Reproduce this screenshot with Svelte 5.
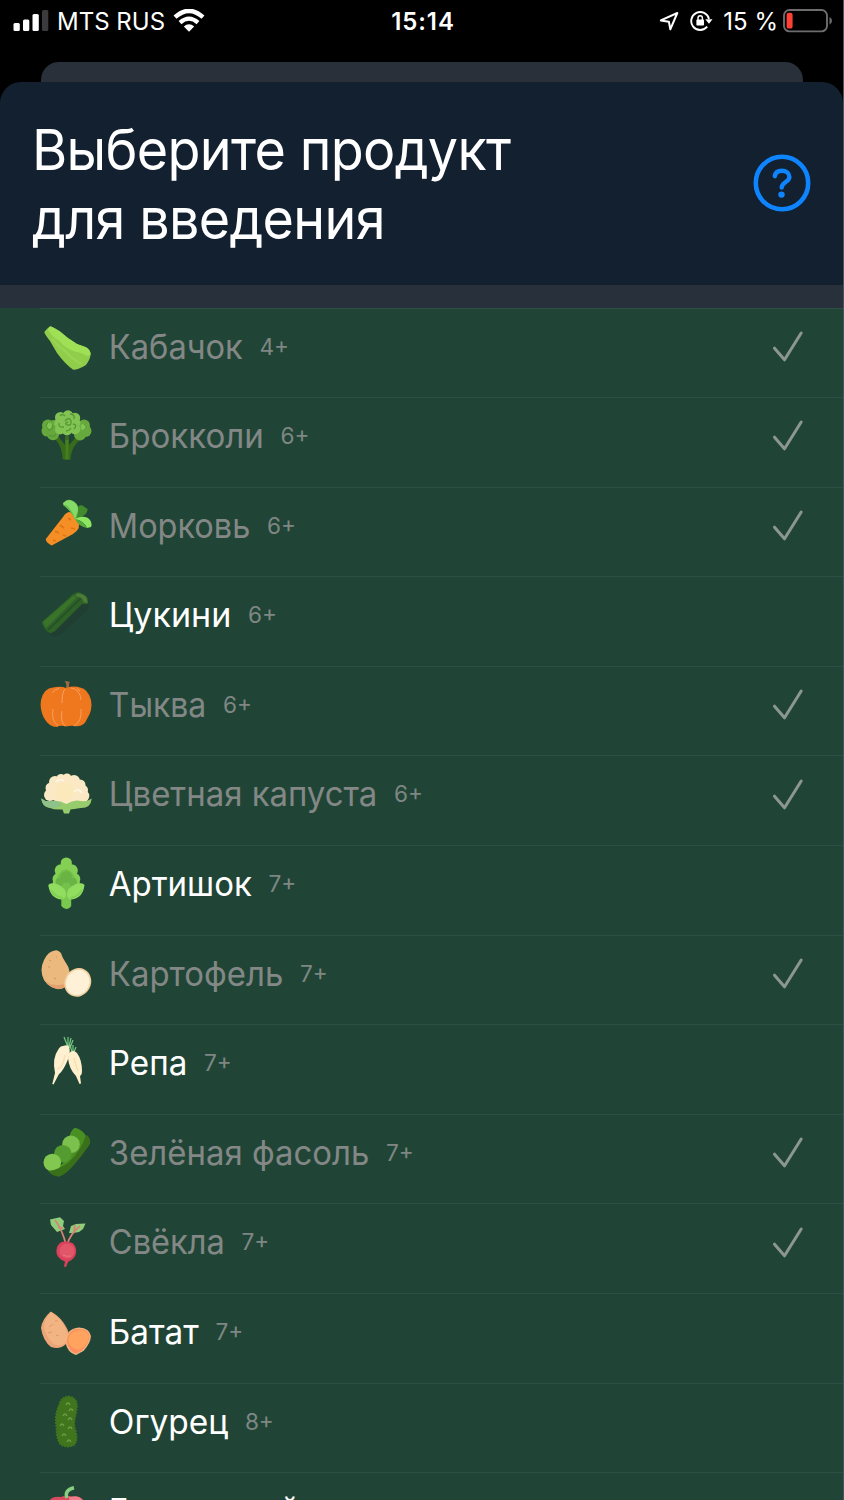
<script>
  const products = [
    { id: 'squash', name: 'Кабачок', age: '4+', done: true, width: 134 },
    { id: 'broccoli', name: 'Брокколи', age: '6+', done: true, width: 155 },
    { id: 'carrot', name: 'Морковь', age: '6+', done: true, width: 141.5 },
    { id: 'zucchini', name: 'Цукини', age: '6+', done: false, width: 122.5 },
    { id: 'pumpkin', name: 'Тыква', age: '6+', done: true, width: 97.5 },
    { id: 'cauliflower', name: 'Цветная капуста', age: '6+', done: true, width: 268.5 },
    { id: 'artichoke', name: 'Артишок', age: '7+', done: false, width: 143 },
    { id: 'potato', name: 'Картофель', age: '7+', done: true, width: 174.5 },
    { id: 'turnip', name: 'Репа', age: '7+', done: false, width: 78.5 },
    { id: 'beans', name: 'Зелёная фасоль', age: '7+', done: true, width: 260.5 },
    { id: 'beet', name: 'Свёкла', age: '7+', done: true, width: 116 },
    { id: 'sweetpotato', name: 'Батат', age: '7+', done: false, width: 90 },
    { id: 'cucumber', name: 'Огурец', age: '8+', done: false, width: 119.5 },
    { id: 'pepper', name: 'Болгарский перец', age: '8+', done: false, width: 299 }
  ];
  const bumps = [[28, 6], [31, 12], [25, 17], [30, 21], [22, 27], [30, 30], [24, 37], [29, 43]];
</script>

<div class="screen">
  <header class="status">
    <div class="carrier">
      <svg class="signal" width="36" height="24" viewBox="0 0 36 24">
        <rect x=".5" y="14" width="6.3" height="8" rx="1.5" fill="#fff" />
        <rect x="10" y="10.5" width="6.3" height="11.5" rx="1.5" fill="#fff" />
        <rect x="19.5" y="5" width="6.3" height="17" rx="1.5" fill="#fff" />
        <rect x="29" y="1" width="6.3" height="21" rx="1.5" fill="#3b3b3d" />
      </svg>
      <span class="operator">MTS RUS</span>
      <svg class="wifi" width="32" height="24" viewBox="0 0 32 24">
        <path d="M2 8.2Q16-4.5 30 8.2" fill="none" stroke="#fff" stroke-width="4.4" />
        <path d="M7 13.6Q16 5.7 25 13.6" fill="none" stroke="#fff" stroke-width="4.2" />
        <path d="M10.8 17.5Q16 13.2 21.2 17.5L16 22.8Z" fill="#fff" />
      </svg>
    </div>
    <span class="clock">15:14</span>
    <div class="indicators">
      <svg class="location" width="20" height="22" viewBox="0 0 20 22">
        <path d="M1.8 11.4 18.3 4 11.3 20.3 9.9 12.7Z" fill="none" stroke="#fff" stroke-width="2" stroke-linejoin="round" />
      </svg>
      <svg class="lock" width="24" height="22" viewBox="0 0 24 22">
        <path d="M17.2 16.7A9 9 0 1 1 19 9" fill="none" stroke="#fff" stroke-width="1.9" />
        <path d="M15.3 9.2H22.5L19 13.8Z" fill="#fff" />
        <rect x="6.4" y="9.6" width="7.6" height="6" rx=".8" fill="#fff" />
        <path d="M8 10V8a2.2 2.2 0 0 1 4.4 0v2" fill="none" stroke="#fff" stroke-width="1.4" />
      </svg>
      <span class="percent">15 %</span>
      <svg class="battery" width="50" height="24" viewBox="0 0 50 24">
        <rect x="1" y="1" width="43" height="21.4" rx="5.5" fill="none" stroke="#6d6d6f" stroke-width="1.9" />
        <rect x="3.6" y="3.8" width="6" height="15.8" rx="2.2" fill="#ff4034" />
        <path d="M46.5 8Q49 9 49 11.7T46.5 15.5Z" fill="#6d6d6f" />
      </svg>
    </div>
  </header>
  <div class="behind"></div>
  <main class="sheet">
    <div class="heading">
      <h1><span>Выберите продукт</span><span>для введения</span></h1>
      <svg class="help" width="58" height="58" viewBox="0 0 58 58" fill="none" stroke="#0f84ff" stroke-linecap="round">
        <circle cx="29" cy="29" r="26.2" stroke-width="4.6" />
        <path d="M21.8 22.2C22.4 18.4 25 16.8 28.8 16.8C33.2 16.8 36.4 19.2 36.4 23C36.4 28.3 28.7 27.8 28.7 33.6" stroke-width="4.4" />
        <circle cx="28.5" cy="40.6" r="3.2" fill="#0f84ff" stroke="none" />
      </svg>
    </div>
    <div class="section"></div>
    <ul>
      {#each products as p}
        <li>
          <svg class="icon" width="52" height="52" viewBox="0 0 52 52">
            {#if p.id === 'squash'}
              <path d="M10.5 4.2Q8.5 4.6 4.3 10Q4.5 12 10 19L17 31Q25 42 33.3 47.8Q38 48 46 43Q51 36 50.5 31.5Q50 28 46 25.3L37 22Q27 16 20 9.5Q13 5 10.5 4.2Z" fill="#90cd4b" />
              <path d="M10.5 4.2 7.5 7.5Q11 13 16 17Q19 18 23 23Q31 29 37 30Q43 31 47 34L50.5 33Q51 28 46 25.3L37 22Q27 16 20 9.5Q13 5 10.5 4.2Z" fill="#9fe056" />
              <path d="M12 16Q17 24 24 28Q31 36 41 42" fill="none" stroke="#99d553" stroke-width="2.2" />
            {:else if p.id === 'broccoli'}
              <path d="M15 28Q22 35 22.7 48Q26 50 30.5 48.4Q30.5 36 42 27L37 25 29 34V25H25V34L18 25Z" fill="#386b1c" />
              <path d="M27 29V48" stroke="#477f20" stroke-width="3" />
              <g fill="#66a83c"><circle cx="8" cy="14.5" r="6" /><circle cx="14" cy="14" r="5" /><circle cx="7" cy="20" r="5.5" /><circle cx="13" cy="23" r="6.2" /><circle cx="44" cy="14.5" r="6" /><circle cx="45.5" cy="20" r="6" /><circle cx="40" cy="23.5" r="6" /></g>
              <g fill="#82c353"><circle cx="20.5" cy="6.5" r="5.5" /><circle cx="28" cy="4.8" r="5.5" /><circle cx="35" cy="7" r="5.2" /><circle cx="19" cy="12.5" r="4.8" /><circle cx="20" cy="18.5" r="5" /><circle cx="27" cy="19.5" r="5" /><circle cx="35" cy="18" r="5.3" /><circle cx="36" cy="12" r="4.5" /><circle cx="28" cy="12" r="10" /><circle cx="9" cy="15" r="3.3" /><circle cx="44" cy="16" r="3.3" /></g>
              <path d="M20 5Q22 2 25 5M30 3Q35 3 34 8M19 12Q18 17 24 16M33 13Q38 14 34 18M25 10Q29 5 31 10Q32 15 27 14Q24 12 28 11M26 20Q29 20 31 17M8 12Q4 15 9 19Q14 17 12 14M44 13Q49 16 44 19M9 24Q13 27 16 23" fill="none" stroke="#559735" stroke-width="1.3" />
            {:else if p.id === 'carrot'}
              <path d="M33 18Q35 4 42 4.3L47.5 8Q48 14 39 17Z" fill="#418b2d" />
              <path d="M30 11Q26 11 23 16L5.8 38Q6 42 11.7 44.4L33 33Q42 27 38 20Q35 14 30 11Z" fill="#f58e24" />
              <path d="M15 30 19 32M20 24 24 27M28 17 31 19M13 39 16 40M23 34 26 35M31 27 35 28" stroke="#dc761c" stroke-width="1.8" />
              <path d="M35 19Q33 12 23 4Q25-2 31-1Q39 2 38 9Q38 15 35 19Z" fill="#65bf48" /><path d="M35 18Q32 8 26 4Q23 4 23 2Q27-2 32 0Q38 3 38 9Z" fill="#86da68" />
              <path d="M35 18Q42 14 48 17Q53 21 51 26L47 27Q44 20 35 18Z" fill="#8ce661" /><path d="M35 18Q44 20 47 27Q39 26 35 18Z" fill="#57aa3c" />
            {:else if p.id === 'zucchini'}
              <path d="M8 42 42 8 48 12Q50 16 47 21L26 40Q18 48 13 47Z" fill="#203e32" />
              <path d="M38.3 2.3Q33 3 29 8L1.8 32Q3 39 9.8 43Q14 43 19 37L42 14 47.6 14Q50 5 38.3 2.3Z" fill="#2f6226" />
              <path d="M3 32 33 6 37 7 6 38Z" fill="#3a742b" /><path d="M8 40 41 8" stroke="#26522a" stroke-width="2" />
              <path d="M38 3Q48 5 47.5 13L43.5 12Q43 7 35 6Z" fill="#4c7c38" />
            {:else if p.id === 'pumpkin'}
              <path d="M24.5 1 29.8 1.8Q28.5 4 29 8H26Q27 4 24.5 1Z" fill="#9c6b44" />
              <path d="M1 20Q4 8 13 7.5Q21 6 26 8Q34 5.5 40 7.5Q48 9 51 20Q53 30 47 39Q44 47 36 46.2Q31 45 26 46.5Q20 45 17 47Q9 47 4 38Q-.5 29 1 20Z" fill="#ef771e" />
              <path d="M19 8.5Q14 9 12.5 13M31 8Q40 9 41 20M25 9Q22 12 22 23M13 29Q11 41 18 45.5M22 31Q20 41 25 46M41 29Q42 42 34 46M37 8.5 40 11" fill="none" stroke="#f6a569" stroke-width=".9" />
            {:else if p.id === 'cauliflower'}
              <g fill="#fbe9c6"><circle cx="10" cy="26" r="6" /><circle cx="11" cy="19" r="5.5" /><circle cx="15" cy="13" r="6" /><circle cx="21" cy="9.5" r="4.5" /><circle cx="27" cy="9" r="4.5" /><circle cx="34" cy="12" r="6" /><circle cx="40" cy="16" r="5.5" /><circle cx="43" cy="21" r="5" /><circle cx="43" cy="27" r="6.3" /><ellipse cx="27" cy="23" rx="17" ry="13" /></g>
              <circle cx="24.5" cy="22.5" r="9.5" fill="#fbe8bb" />
              <path d="M34 23Q38 18 42 24M16 13Q19 9 24 12" fill="none" stroke="#fff5de" stroke-width="2" />
              <path d="M1.3 29.5Q5 33 12 32Q19 31 26.5 35Q34 30 41 32Q47 33 51.7 29.5Q51 39 41 39Q33 40 30.5 40.5L29 44.5H24L22.5 40.5Q14 41 10 39Q2 38 1.3 29.5Z" fill="#97cc6c" />
              <path d="M1.3 29.5Q5 33 12 32Q17 31 22 36Q15 40 9 38.5Q2 37 1.3 29.5Z" fill="#8ec28a" />
            {:else if p.id === 'artichoke'}
              <path d="M21.3 36H31.2V47Q29 50.5 26.2 50T21.3 47Z" fill="#7ac94f" />
              <g fill="#84d054"><circle cx="26.3" cy="4" r="5.6" /><circle cx="21" cy="11.5" r="6.3" /><circle cx="31.5" cy="11.5" r="6.3" /><circle cx="18.5" cy="20" r="6" /><circle cx="34.3" cy="20" r="6" /><ellipse cx="26.3" cy="24" rx="13.5" ry="10" /></g>
              <path d="M16 23Q18 12 26 10Q34 12 36.5 23L33 36H19Z" fill="#74c14c" /><circle cx="26.3" cy="18" r="6" fill="#69b444" /><circle cx="19.5" cy="23" r="4" fill="#6ab446" /><circle cx="33" cy="23" r="4" fill="#6ab446" />
              <path d="M8.3 26Q10 23 17 25Q26 29 26 35Q26 40 21 40.5Q10 39 8.3 26ZM44.5 26Q43 23 36 25Q27 29 27 35Q27 40 31.5 40.5Q43 39 44.5 26Z" fill="#90dd5f" />
              <path d="M11 31Q15 38 23 39M42 31Q38 38 30 39" fill="none" stroke="#82cf56" stroke-width="2" />
            {:else if p.id === 'potato'}
              <path d="M16 1.2Q8 2 4 11Q-1 21 4 31Q10 40 20 40Q28 39 29 29Q31 21 26 14Q22 8 21 4Q18 .8 16 1.2Z" fill="#ebb97e" />
              <path d="M2 25Q5 37 18 36Q24 36 28 34Q26 40 18 40.3Q5 38 2 25Z" fill="#e3a16e" />
              <path d="M9 11 11 12M16 8 17 8M8 18 10 18M14 29 16 30" stroke="#d59550" stroke-width="1" />
              <ellipse cx="37.7" cy="33.4" rx="12.4" ry="13.8" transform="rotate(28 37.7 33.4)" fill="#fff0d8" stroke="#f3cf9d" stroke-width="1.6" />
            {:else if p.id === 'turnip'}
              <path d="M28 9 24-1M28 8V-1M29 9 31 0M30 10 33 2M32 14 30 7M33 14V7M34 14 36 9" fill="none" stroke="#78c982" stroke-width="1.2" />
              <path d="M23 8Q28 6 29.3 9Q31 16 26 26Q22 34 19 36L13.5 46.5 12.3 46 15 35Q12 20 18 12Q20 8 23 8Z" fill="#fff1d0" />
              <path d="M29 15Q33 11 37 15Q42 22 42 33Q42 37 40 38L41 45.5 39.5 46 36 38Q29 31 28 20Z" fill="#fff0cc" />
              <path d="M17 31Q23 30 25 17M38 33Q35 25 34 20" fill="none" stroke="#f6dfb5" stroke-width="1.4" />
            {:else if p.id === 'beans'}
              <path d="M35-.2Q31 2 29.5 8L31 24 22 36 10 43H22L40 28 46 8Q43 2 35-.2Z" fill="#4a8f22" />
              <circle cx="31" cy="16.2" r="8.8" fill="#7cc14e" /><circle cx="22.8" cy="25.8" r="8.8" fill="#559c30" /><circle cx="12.3" cy="34.5" r="8.8" fill="#82c850" />
              <path d="M46 7Q51 9 50 16Q42 28 33 38Q25 47 19 48.7Q12 48 8 43Q20 41.5 29 34Q41 23 46 7Z" fill="#3b701b" />
            {:else if p.id === 'beet'}
              <path d="M10 2.5 20 .2 24 4 23 9 25 12 17 15 11 8ZM29 16 31 9 36 7 45.5 6.5 43 12 39 15 33 16Z" fill="#8fce7a" />
              <path d="M26 28Q23 14 15 3M27 28Q30 17 40 9M23 11 18 10M34 14 35 8" fill="none" stroke="#d98277" stroke-width="1.7" />
              <path d="M26.3 24.5Q37 25 36 36Q35 42 28 45L26 50 24 49.8 25 44.5Q16 41 16.4 34Q17 24 26.3 24.5Z" fill="#d9415c" />
              <circle cx="27" cy="34" r="7.5" fill="#e2566a" /><path d="M23 38Q27 40 31 39" fill="none" stroke="#ec727e" />
            {:else if p.id === 'sweetpotato'}
              <path d="M10.7 4.4Q2 12 1 21Q3 34 11 40Q20 43 26 37L29 27Q28 22 23 15Q19 9 10.7 4.4Z" fill="#eca578" />
              <path d="M11 5Q4 12 4 21Q7 32 14 37Q23 41 26 34Q29 26 23 17Q19 10 11 5Z" fill="#f2b482" />
              <path d="M9 20 13 17M15 14 18 14M8 26 12 25M16 28 19 29" stroke="#db9668" stroke-width=".9" />
              <path d="M39 21.2Q49 22 50.3 29Q50 36 43 43.5L36 47.3Q28 45 26 35Q27 22 39 21.2Z" fill="#ff8f5e" stroke="#efb680" stroke-width="1.3" />
              <path d="M38 23Q49 23 49 30Q47 39 39 43Q29 41 28 33Q30 24 38 23Z" fill="#ffa35f" />
            {:else if p.id === 'cucumber'}
              <path d="M28-.5Q36 0 37 7Q37 12 35.5 19Q33 27 36 35Q38 44 34 48Q27 52 20 47Q16 40 16.5 31Q14 19 19 8Q21 0 28-.5Z" fill="#41751d" stroke="#41751d" stroke-width="1.5" stroke-dasharray="2 1" />
              {#each bumps as [x, y]}<path d="M{x - 2} {y + 2}q2-4 4 0" fill="none" stroke="#6d9b43" stroke-width="1.3" />{/each}
            {:else}
              <path d="M9 15Q12 10 21 11Q27 8 32 11Q41 9 44 16L47 35Q39 50 27 46Q14 50 7 34Z" fill="#d64b5e" />
              <path d="M29 11Q40 8 44 16L47 30Q38 39 32 30Z" fill="#ed7d89" /><path d="M27 12Q24 4 34 1.8" fill="none" stroke="#87cf80" stroke-width="3.5" />
            {/if}
          </svg>
          <svg class="name" class:active={!p.done} width={p.width} height="44">
            <text x="-.2" y="32.6" textLength={p.width} lengthAdjust="spacingAndGlyphs">{p.name}</text>
          </svg>
          <span class="age">{p.age}</span>
          {#if p.done}
            <svg class="check" width="32" height="32" viewBox="0 0 32 32"><path d="M2.5 18.2 12.5 29.8 29.2 3" /></svg>
          {/if}
        </li>
      {/each}
    </ul>
  </main>
</div>

<style>
  :global(body) { background: #000; }
  .screen { width: 844px; height: 1500px; box-sizing: border-box; overflow: hidden; background: #000; color: #fff; border-right: 1px solid #4b535b; font-family: Inter, "Liberation Sans", sans-serif; display: flex; flex-direction: column; }
  .status { height: 61.5px; flex: none; display: grid; grid-template-columns: 1fr auto 1fr; align-items: start; box-sizing: border-box; padding: 9px 10px 0 13px; font-size: 24px; line-height: 26px; }
  .carrier, .indicators { display: flex; align-items: flex-start; }
  .operator { margin-left: 8px; }
  .wifi { margin-left: 8px; }
  .clock { font-weight: 600; letter-spacing: .9px; }
  .indicators { justify-content: flex-end; }
  .lock { margin-left: 11px; margin-top: 1px; }
  .percent { margin-left: 9.5px; }
  .battery { margin-left: 5px; }
  .behind { height: 20px; flex: none; margin: 0 40px 0 41px; background: #2a303a; border-radius: 18px 18px 0 0; }
  .sheet { flex: 1; min-height: 0; background: #122030; border-radius: 21px 21px 0 0; overflow: hidden; }
  .heading { height: 203px; box-sizing: border-box; padding: 34px 32px 0 32px; display: flex; justify-content: space-between; }
  h1 { margin: 0; font-size: 56px; font-weight: 400; line-height: 69px; letter-spacing: -.7px; transform: scaleX(.962); transform-origin: left; }
  h1 span { display: block; }
  .help { margin-top: 38.5px; }
  .section { height: 23px; background: #28303c; }
  ul { margin: 0; padding: 0; list-style: none; background: #204536; }
  li { height: 89.6px; box-sizing: border-box; padding: 14px 39px 0 40px; display: flex; align-items: flex-start; background: linear-gradient(#2d4f43, #2d4f43) 40px 0 / 100% 1px no-repeat; }
  .icon, .name { overflow: visible; }
  .icon { flex: none; margin-left: .4px; }
  .name { margin: 4px 0 0 17px; flex: none; font-size: 33.6px; fill: #838886; }
  .name.active { fill: #fff; }
  .age { margin: 11px 0 0 16px; font-size: 22.6px; line-height: 28px; color: #7f8784; }
  .check { margin: 8.2px 0 0 auto; fill: none; stroke: #8c9692; stroke-width: 3; stroke-linecap: round; stroke-linejoin: round; }
</style>
